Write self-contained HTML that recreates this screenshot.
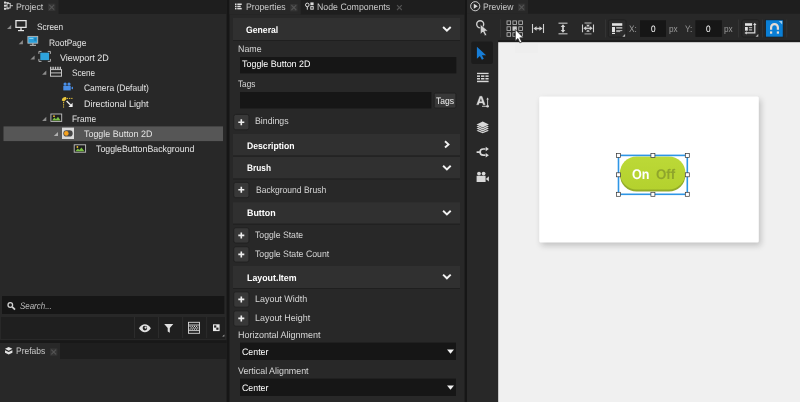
<!DOCTYPE html>
<html><head><meta charset="utf-8">
<style>
*{box-sizing:border-box;margin:0;padding:0}
html,body{width:800px;height:402px;overflow:hidden;background:#161616}
body{font-family:"Liberation Sans",sans-serif;font-size:9.4px;text-rendering:geometricPrecision;color:#e6e6e6;position:relative}
.a{position:absolute}
.t{position:absolute;white-space:nowrap;line-height:12px;height:12px;transform-origin:0 50%}
svg{position:absolute;left:0;top:0}
</style></head><body>
<svg width="800" height="402" viewBox="0 0 800 402">
<!-- LEFT PANEL -->
<rect x="0" y="0" width="226.6" height="402" fill="#282828"/>
<rect x="0" y="0" width="226.6" height="14" fill="#1e1e1e"/>
<rect x="0" y="0" width="58.5" height="14" fill="#282828"/>
<rect x="3.5" y="126.4" width="219.5" height="14.7" fill="#565656"/>
<rect x="2" y="296" width="222.3" height="18" fill="#161616"/>
<rect x="1" y="317" width="224" height="22" fill="#1f1f1f"/>
<g fill="#2c2c2c"><rect x="134" y="317" width="1" height="21"/><rect x="158" y="317" width="1" height="21"/><rect x="182.200" y="317" width="1" height="21"/><rect x="206.200" y="317" width="1" height="21"/></g>
<rect x="0" y="340.2" width="226.6" height="2.8" fill="#181818"/>
<rect x="0" y="343" width="226.6" height="16" fill="#1e1e1e"/>
<rect x="0" y="343" width="60" height="16" fill="#282828"/>
<!-- MIDDLE PANEL -->
<rect x="229.5" y="0" width="235.1" height="402" fill="#282828"/>
<rect x="229.5" y="0" width="235.1" height="14.6" fill="#1e1e1e"/>
<rect x="229.5" y="0" width="71.2" height="14.6" fill="#282828"/>
<g fill="#303030">
<rect x="233" y="18" width="227" height="22"/>
<rect x="233" y="134" width="227" height="21.500"/>
<rect x="233" y="157" width="227" height="21.500"/>
<rect x="233" y="202.200" width="227" height="21.500"/>
<rect x="233" y="266" width="227" height="22"/>
</g>
<g fill="#1f1f1f"><rect x="233" y="40" width="227" height="1"/><rect x="233" y="155.5" width="227" height="1"/><rect x="233" y="178.5" width="227" height="1"/><rect x="233" y="223.700" width="227" height="1"/><rect x="233" y="288" width="227" height="1"/></g>
<g fill="#161616">
<rect x="240" y="57" width="216.300" height="16.400"/>
<rect x="240" y="92" width="191.400" height="16.500"/>
<rect x="240" y="342.600" width="216" height="17.400"/>
<rect x="240" y="378.600" width="216" height="17.400"/>
</g>
<rect x="434.200" y="93.100" width="21.700" height="14.900" rx="1.500" fill="#383838" stroke="#1f1f1f" stroke-width="0.900"/>
<g fill="#383838" stroke="#1f1f1f" stroke-width="0.9">
<rect x="233.75" y="114.45" width="15.2" height="15.3" rx="2"/>
<rect x="233.75" y="182.35" width="15.2" height="15.3" rx="2"/>
<rect x="233.75" y="227.75" width="15.2" height="15.3" rx="2"/>
<rect x="233.75" y="246.75" width="15.2" height="15.3" rx="2"/>
<rect x="233.75" y="291.85" width="15.2" height="15.3" rx="2"/>
<rect x="233.75" y="310.85" width="15.2" height="15.3" rx="2"/>
</g>
<!-- RIGHT PANEL -->
<rect x="467" y="0" width="333" height="402" fill="#282828"/>
<rect x="467" y="0" width="333" height="13.750" fill="#1e1e1e"/>
<rect x="467" y="0" width="61" height="13.750" fill="#282828"/>
<rect x="498" y="40" width="302" height="3" fill="#1c1c1c"/>
<rect x="498.200" y="42.200" width="302" height="360" fill="#f0f0f0"/>
<rect x="515" y="43.500" width="23" height="9.500" fill="#eeeeee"/>
<rect x="471.200" y="41.500" width="21.800" height="22.500" rx="2" fill="#1c1c1c"/>
<g fill="#333"><rect x="500" y="19.400" width="1" height="18"/><rect x="605" y="19.400" width="1" height="18"/><rect x="738" y="19.400" width="1" height="18"/><rect x="762" y="19.400" width="1" height="18"/><rect x="786.200" y="19.400" width="1" height="18"/></g>
<rect x="608.400" y="19.800" width="17.700" height="17.300" rx="1.800" fill="#2b2b2b" stroke="#1e1e1e" stroke-width="0.800"/>
<rect x="741.900" y="19.800" width="17.200" height="17.300" rx="1.800" fill="#2b2b2b" stroke="#1e1e1e" stroke-width="0.800"/>
<rect x="640" y="20.250" width="26" height="16.600" fill="#161616"/>
<rect x="695.400" y="20.250" width="26.500" height="16.600" fill="#161616"/>
<rect x="765.400" y="19.800" width="17.800" height="17.300" fill="#0a7fd6" stroke="#1c1c1c" stroke-width="0.800"/>
<defs><filter id="sh" x="-10%" y="-10%" width="125%" height="130%"><feGaussianBlur stdDeviation="3.2"/></filter>
<linearGradient id="pg" x1="0" y1="0" x2="0" y2="1"><stop offset="0" stop-color="#bcd937"/><stop offset="1" stop-color="#b4d12e"/></linearGradient></defs>
<rect x="541.2" y="99.5" width="219.6" height="146" fill="#000" opacity="0.2" filter="url(#sh)"/>
<rect x="539.2" y="96.5" width="219.6" height="146" rx="1.5" fill="#fff"/>
<rect x="620" y="158.600" width="65.400" height="33" rx="16.500" fill="#93ac28"/>
<rect x="620" y="156.400" width="65.400" height="33" rx="16.500" fill="url(#pg)"/>
</svg>

<span class="t" style="left:16.10px;top:1.00px;color:#c9c9c9;transform:scaleX(0.935);">Project</span>
<span class="t" style="left:37.23px;top:21.00px;color:#e4e4e4;transform:scaleX(0.88);">Screen</span>
<span class="t" style="left:49.02px;top:37.00px;color:#e4e4e4;transform:scaleX(0.896);">RootPage</span>
<span class="t" style="left:60.19px;top:52.00px;color:#e4e4e4;transform:scaleX(0.959);">Viewport 2D</span>
<span class="t" style="left:72.03px;top:67.00px;color:#e4e4e4;transform:scaleX(0.87);">Scene</span>
<span class="t" style="left:83.62px;top:82.00px;color:#e4e4e4;transform:scaleX(0.903);">Camera (Default)</span>
<span class="t" style="left:83.99px;top:98.00px;color:#e4e4e4;transform:scaleX(0.958);">Directional Light</span>
<span class="t" style="left:72.22px;top:113.00px;color:#e4e4e4;transform:scaleX(0.892);">Frame</span>
<span class="t" style="left:83.60px;top:128.00px;color:#e4e4e4;transform:scaleX(0.951);">Toggle Button 2D</span>
<span class="t" style="left:96.00px;top:143.00px;color:#e4e4e4;transform:scaleX(0.939);">ToggleButtonBackground</span>
<span class="t" style="left:19.65px;top:300.00px;color:#bcbcbc;transform:scaleX(0.846);font-style:italic;">Search...</span>
<span class="t" style="left:16.22px;top:345.00px;color:#c9c9c9;transform:scaleX(0.903);">Prefabs</span>
<span class="t" style="left:245.51px;top:1.00px;color:#c9c9c9;transform:scaleX(0.926);">Properties</span>
<span class="t" style="left:316.70px;top:1.00px;color:#c9c9c9;transform:scaleX(0.935);">Node Components</span>
<span class="t" style="left:246.11px;top:24.00px;color:#ffffff;transform:scaleX(0.924);font-weight:bold;">General</span>
<span class="t" style="left:237.60px;top:43.00px;color:#d6d6d6;transform:scaleX(0.943);">Name</span>
<span class="t" style="left:241.90px;top:58.00px;color:#ffffff;transform:scaleX(0.952);">Toggle Button 2D</span>
<span class="t" style="left:237.63px;top:78.00px;color:#d6d6d6;transform:scaleX(0.875);">Tags</span>
<span class="t" style="left:436.01px;top:95.00px;color:#f0f0f0;transform:scaleX(0.912);">Tags</span>
<span class="t" style="left:255.20px;top:115.00px;color:#d6d6d6;transform:scaleX(0.934);">Bindings</span>
<span class="t" style="left:246.81px;top:140.00px;color:#ffffff;transform:scaleX(0.922);font-weight:bold;">Description</span>
<span class="t" style="left:246.63px;top:162.00px;color:#ffffff;transform:scaleX(0.884);font-weight:bold;">Brush</span>
<span class="t" style="left:255.82px;top:184.00px;color:#d6d6d6;transform:scaleX(0.91);">Background Brush</span>
<span class="t" style="left:246.60px;top:207.00px;color:#ffffff;transform:scaleX(0.947);font-weight:bold;">Button</span>
<span class="t" style="left:255.21px;top:229.00px;color:#d6d6d6;transform:scaleX(0.924);">Toggle State</span>
<span class="t" style="left:255.21px;top:248.00px;color:#d6d6d6;transform:scaleX(0.93);">Toggle State Count</span>
<span class="t" style="left:246.60px;top:272.00px;color:#ffffff;transform:scaleX(0.942);font-weight:bold;">Layout.Item</span>
<span class="t" style="left:255.20px;top:293.00px;color:#d6d6d6;transform:scaleX(0.954);">Layout Width</span>
<span class="t" style="left:255.20px;top:312.00px;color:#d6d6d6;transform:scaleX(0.954);">Layout Height</span>
<span class="t" style="left:237.59px;top:329.00px;color:#d6d6d6;transform:scaleX(0.961);">Horizontal Alignment</span>
<span class="t" style="left:241.60px;top:346.00px;color:#ffffff;transform:scaleX(0.938);">Center</span>
<span class="t" style="left:237.60px;top:365.00px;color:#d6d6d6;transform:scaleX(0.947);">Vertical Alignment</span>
<span class="t" style="left:241.60px;top:382.00px;color:#ffffff;transform:scaleX(0.938);">Center</span>
<span class="t" style="left:482.51px;top:1.00px;color:#c9c9c9;transform:scaleX(0.911);">Preview</span>
<span class="t" style="left:628.60px;top:23.00px;color:#9a9a9a;transform:scaleX(0.88);">X:</span>
<span class="t" style="left:651.00px;top:23.00px;color:#ffffff;transform:scaleX(0.88);">0</span>
<span class="t" style="left:668.77px;top:23.00px;color:#9a9a9a;transform:scaleX(0.88);">px</span>
<span class="t" style="left:685.08px;top:23.00px;color:#9a9a9a;transform:scaleX(0.88);">Y:</span>
<span class="t" style="left:706.33px;top:23.00px;color:#ffffff;transform:scaleX(0.88);">0</span>
<span class="t" style="left:724.34px;top:23.00px;color:#9a9a9a;transform:scaleX(0.88);">px</span>
<span class="t" style="left:632.04px;top:165.85px;color:#ffffff;transform:scaleX(0.896);font-size:14px;line-height:16px;height:16px;font-weight:bold;">On</span>
<span class="t" style="left:656.40px;top:165.85px;color:#8fa52b;transform:scaleX(0.949);font-size:14px;line-height:16px;height:16px;font-weight:bold;">Off</span>

<svg width="800" height="402" viewBox="0 0 800 402">
<!-- tree arrows -->
<g fill="#8c8c8c">
<path d="M11.2 24.9v4.200h-4.200z"/>
<path d="M22.9 40.1v4.200h-4.200z"/>
<path d="M34.6 55.4v4.200h-4.200z"/>
<path d="M46.3 70.6v4.200h-4.200z"/>
<path d="M46.3 116.7v4.200h-4.200z"/>
<path d="M58.0 131.9v4.200h-4.200z" fill="#b0b0b0"/>
</g>
<!-- project tab icon -->
<g fill="#d8d8d8"><rect x="4" y="1.600" width="2" height="2"/><rect x="4" y="4.700" width="2" height="2"/><rect x="4" y="7.800" width="2" height="2"/></g>
<g fill="none" stroke="#d8d8d8" stroke-width="0.900"><rect x="7" y="3.400" width="3.200" height="4.600"/><path d="M6 2.600h2.600v0.800M6 5.700h1M6 8.800h2.600v-0.800M10.200 5.700h2.800"/></g>
<!-- Screen icon -->
<g fill="#e6e6e6"><path d="M15.3 19.9h11.4v8.2h-11.4zM16.6 21.2v5.6h8.8v-5.6z" fill-rule="evenodd"/>
<rect x="20.3" y="28.1" width="1.4" height="2"/><rect x="18" y="30" width="6" height="1.2"/></g>
<!-- RootPage icon -->
<g><rect x="27.9" y="36.4" width="9.8" height="6.8" fill="#2a9fda" stroke="#b8b8b8" stroke-width="0.9"/>
<rect x="29.3" y="37.8" width="4" height="1.2" fill="#7fd0f5"/><rect x="34.3" y="37.8" width="2" height="3" fill="#1f7fb5"/>
<rect x="32.3" y="43.4" width="1.2" height="1.6" fill="#c8c8c8"/><rect x="29.8" y="44.8" width="6.2" height="1" fill="#c8c8c8"/></g>
<!-- Viewport 2D icon -->
<g><rect x="40.3" y="52.7" width="8.8" height="7.4" fill="#2fa4dd"/>
<path d="M38.9 53.9v-2.5h2.6M47.8 51.4h2.6v2.5M50.4 58.9v2.5h-2.6M41.5 61.4h-2.6v-2.5" fill="none" stroke="#bdbdbd" stroke-width="0.9"/></g>
<!-- Scene icon -->
<g fill="none" stroke="#c6c6c6" stroke-width="1"><rect x="50.5" y="69.6" width="11" height="6.6"/><path d="M50.5 72.9h11"/>
<path d="M50 68h12" stroke-width="2.6" stroke-dasharray="1.4 1"/></g>
<!-- Camera icon (blue) -->
<g fill="#4a8fe8"><circle cx="65.1" cy="84.1" r="1.6"/><circle cx="69" cy="84.1" r="1.6"/><rect x="63.3" y="85.8" width="7.4" height="4.6"/><path d="M71 88.1l2-1.5v3z"/></g>
<!-- Directional light -->
<g><path d="M61.8 100.4c0-2 1.6-3.6 4.2-3.4l0.6 2-2.6 2.6z" fill="#e8c53a"/>
<path d="M66.8 98.4h6.4M63.6 102v5.6" stroke="#e8c53a" stroke-width="1" stroke-dasharray="1.3 0.9" fill="none"/>
<path d="M66.6 101l4 4" stroke="#f0f0f0" stroke-width="1.3"/><path d="M72.6 107h-4.2l4.2-4.2z" fill="#f0f0f0"/></g>
<!-- Frame icon -->
<g><rect x="50.9" y="114" width="10.8" height="7.4" fill="#1e1e1e" stroke="#c2c2c2" stroke-width="0.9"/>
<path d="M52 120.4l2.4-2.8 1.6 1.6 2-2.4 2.6 3.6z" fill="#79c143"/><circle cx="54" cy="116.2" r="0.9" fill="#f0c030"/></g>
<!-- Toggle icon -->
<g><rect x="62" y="127.6" width="12" height="11.4" fill="#dadada"/><rect x="63.3" y="130.3" width="9.4" height="6.2" rx="3.1" fill="#474747"/><circle cx="66.3" cy="133.4" r="2.3" fill="#f6a21e"/></g>
<!-- TBB icon -->
<g><rect x="74.2" y="144.8" width="11.4" height="7.4" fill="#1e1e1e" stroke="#c2c2c2" stroke-width="0.9"/>
<path d="M75.4 151.2l2.4-2.8 1.6 1.6 2-2.4 3 3.6z" fill="#79c143"/><circle cx="77.4" cy="147" r="0.9" fill="#f0c030"/></g>
<!-- tab close x's -->
<g fill="#343434"><rect x="48" y="3.600" width="7.400" height="7.400"/><rect x="50" y="348.300" width="7.400" height="7.400"/><rect x="290.100" y="4" width="7.400" height="7.400"/><rect x="517.900" y="3.600" width="7.400" height="7.400"/></g>
<g stroke="#545454" stroke-width="1.1" fill="none">
<path d="M49.3 4.8l4.8 4.8M54.1 4.8l-4.8 4.8"/>
<path d="M51.3 349.6l4.8 4.8M56.1 349.6l-4.8 4.8"/>
<path d="M291.4 5.2l4.8 4.8M296.2 5.2l-4.8 4.8"/>
<path d="M397 5.2l4.8 4.8M401.8 5.2l-4.8 4.8"/>
<path d="M519.2 4.8l4.8 4.8M524 4.8l-4.8 4.8"/>
</g>
<!-- search magnifier -->
<g fill="none" stroke="#d0d0d0"><circle cx="10.3" cy="305" r="2.3" stroke-width="1.3"/><path d="M12.2 306.900l2.800 2.700" stroke-width="1.800"/></g>
<!-- prefabs icon -->
<g fill="#e2e2e2"><path d="M8.7 346.9l3.7 1.9-3.7 1.9-3.7-1.9z"/><path d="M5 350.2l3.7 1.9 3.7-1.9v2.5l-3.7 1.9-3.7-1.9z" /></g>
<!-- left toolbar icons -->
<g fill="#e0e0e0">
<path d="M138.9 328.3c1.8-2.7 3.8-4 6-4s4.200 1.300 6 4c-1.800 2.700-3.800 4-6 4s-4.200-1.300-6-4z"/>
<circle cx="144.900" cy="328.100" r="2.300" fill="#202020"/><circle cx="145.600" cy="327.600" r="1.100"/>
<path d="M164.200 323.900h9.100l-3.500 4v4.900l-2.100-1.300v-3.600z"/>
</g>
<g fill="none" stroke="#d8d8d8" stroke-width="0.9"><rect x="188.500" y="322.300" width="11" height="11"/><path d="M188.500 325h11M188.500 330.600h11"/>
<path d="M189.500 326.400h9M189.500 329.200h9" stroke-dasharray="1.100 1.100" stroke-width="1.300"/><path d="M190.600 327.800h9" stroke-dasharray="1.100 1.100" stroke-width="1.300"/></g>
<g><rect x="213" y="324.300" width="6.600" height="6.800" fill="#e8e8e8"/><rect x="214.100" y="325.400" width="2.200" height="2.200" fill="#222"/><rect x="216.300" y="327.600" width="2.200" height="2.200" fill="#222"/>
<path d="M224.400 334.400v2.200h-2.200z" fill="#aaa"/></g>
<!-- properties tab icon -->
<g fill="#e0e0e0"><rect x="235" y="3.500" width="1.500" height="1.500"/><rect x="235" y="5.700" width="1.500" height="1.500"/><rect x="235" y="7.900" width="1.500" height="1.500"/>
<rect x="237.300" y="3.500" width="4.400" height="1.500"/><rect x="237.300" y="5.700" width="3.400" height="1.500"/><rect x="237.300" y="7.900" width="4.400" height="1.500"/></g>
<!-- node components icon -->
<g fill="none" stroke="#dcdcdc" stroke-width="1"><circle cx="307.300" cy="4.900" r="1.800"/><path d="M307.300 6.700v3"/><rect x="310.800" y="6.600" width="2.400" height="2.600"/></g>
<rect x="310.400" y="2.400" width="3.200" height="2.800" fill="#dcdcdc"/>
<!-- chevrons -->
<g fill="none" stroke="#f2f2f2" stroke-width="1.900">
<path d="M443.100 27l3.800 3.700 3.800-3.700"/>
<path d="M445 141.300l3.500 3.100-3.500 3.100"/>
<path d="M443.100 165.800l3.800 3.700 3.800-3.700"/>
<path d="M443.100 210.800l3.800 3.700 3.800-3.700"/>
<path d="M443.100 274.600l3.800 3.700 3.800-3.700"/>
</g>
<!-- plus signs -->
<g fill="#ededed">
<path d="M238.300 121.400h6v1.600h-6zM240.500 119.200h1.600v6h-1.600z"/>
<path d="M238.300 189h6v1.600h-6zM240.500 186.800h1.600v6h-1.600z"/>
<path d="M238.300 234.600h6v1.600h-6zM240.500 232.400h1.600v6h-1.600z"/>
<path d="M238.300 253.600h6v1.600h-6zM240.500 251.400h1.600v6h-1.600z"/>
<path d="M238.300 298.600h6v1.600h-6zM240.500 296.400h1.600v6h-1.600z"/>
<path d="M238.300 317.600h6v1.600h-6zM240.500 315.400h1.600v6h-1.600z"/>
</g>
<!-- dropdown triangles -->
<g fill="#f2f2f2"><path d="M447 349.600h7l-3.500 4.200z"/><path d="M447 385.600h7l-3.500 4.200z"/></g>
<!-- preview tab icon -->
<g><circle cx="475.200" cy="6.200" r="4.600" fill="none" stroke="#dcdcdc" stroke-width="0.9"/><path d="M473.800 3.700l4 2.500-4 2.500z" fill="#dcdcdc"/></g>
<!-- toolbar: select-click icon -->
<g><circle cx="480.200" cy="24.200" r="3.500" fill="none" stroke="#cfcfcf" stroke-width="1.400"/><path d="M480.300 24.300l7.800 6.600-3.200 0.400 1.900 3.700-1.900 0.900-1.900-3.800-2.700 2.200z" fill="#cfcfcf" stroke="#252525" stroke-width="0.700"/></g>
<!-- 3x3 grid -->
<g fill="none" stroke="#bdbdbd" stroke-width="0.800">
<rect x="507" y="20.900" width="3.600" height="3.600"/><rect x="512.900" y="20.900" width="3.600" height="3.600"/><rect x="518.800" y="20.900" width="3.600" height="3.600"/>
<rect x="507" y="26.800" width="3.600" height="3.600"/><rect x="512.900" y="26.800" width="3.600" height="3.600" fill="#d0d0d0"/><rect x="518.800" y="26.800" width="3.600" height="3.600"/>
<rect x="507" y="32.700" width="3.600" height="3.600"/><rect x="512.900" y="32.700" width="3.600" height="3.600"/><rect x="518.800" y="32.700" width="3.600" height="3.600"/>
</g>
<!-- mouse cursor -->
<path d="M515.300 29.500v11.400l2.600-2.400 2 4.400 1.900-0.900-2-4.200h3.600z" fill="#fff" stroke="#222" stroke-width="0.700"/>
<!-- horizontal stretch -->
<g fill="none" stroke="#cfcfcf"><path d="M532.500 24v9M543.500 24v9" stroke-width="1.100"/><path d="M535.500 28.500h5" stroke-width="1.500"/></g>
<g fill="#cfcfcf"><path d="M533.400 28.500l3.200-2.300v4.600zM542.600 28.500l-3.200-2.300v4.600z"/></g>
<!-- vertical stretch -->
<g fill="none"><path d="M558.500 23.200h9M558.500 33.800h9" stroke="#9a9a9a" stroke-width="1.500"/><path d="M563 26.500v4" stroke="#d4d4d4" stroke-width="1.700"/></g>
<g fill="#d4d4d4"><path d="M563 24.300l2.300 2.700h-4.600zM563 32.700l2.300-2.700h-4.600z"/></g>
<!-- fit both -->
<g fill="none"><path d="M582.500 24.400v7.800M593.500 24.400v7.800" stroke="#cfcfcf" stroke-width="1.100"/><path d="M585.500 28.300h5" stroke="#cfcfcf" stroke-width="1.300"/><path d="M584.500 23h7M584.500 33.800h7" stroke="#8c8c8c" stroke-width="1.300"/></g>
<g fill="#cfcfcf"><path d="M583.300 28.300l3-2.200v4.400zM592.700 28.300l-3-2.200v4.400zM588 27.200l-1.800-2.400h3.600zM588 29.400l-1.800 2.400h3.600z"/></g>
<!-- layout button icon 1 -->
<g fill="#e2e2e2"><rect x="612" y="23.200" width="10.300" height="2.600"/><rect x="612" y="27" width="3" height="5.100"/><rect x="616.200" y="27" width="6.100" height="1.700" fill="#a8a8a8"/><rect x="616.200" y="30" width="6.100" height="1.100" fill="#a8a8a8"/><rect x="616.200" y="31" width="4" height="1.100" fill="#a8a8a8"/><rect x="612" y="32.900" width="3" height="1.100"/>
<path d="M625.100 33.900v2.800h-2.800z" fill="#b4b4b4"/></g>
<!-- layout button icon 2 -->
<g><rect x="745" y="23.200" width="7.100" height="2.600" fill="#e2e2e2"/><rect x="745" y="27" width="2.800" height="3.700" fill="#e2e2e2"/><rect x="748.900" y="27" width="3.200" height="1" fill="#b0b0b0"/><rect x="748.900" y="28.700" width="3.200" height="2" fill="#909090"/>
<path d="M754.800 24.500v8.400M746.500 32.900h8.900" stroke="#dcdcdc" stroke-width="1.200" fill="none"/><path d="M754.800 22.700l1.700 2.300h-3.400zM744.500 32.900l2.300-1.700v3.400z" fill="#dcdcdc"/>
<path d="M758.300 33.900v2.800h-2.800z" fill="#b4b4b4"/></g>
<!-- magnet icon -->
<g><path d="M771.100 29.800v-2.300a3.400 3.400 0 0 1 6.800 0v2.300" fill="none" stroke="#e6dcd4" stroke-width="2.200"/><rect x="770" y="31.400" width="2.200" height="2.300" fill="#e6dcd4"/><rect x="776.800" y="31.400" width="2.200" height="2.300" fill="#e6dcd4"/>
<path d="M778.800 21h3.400v3.400z" fill="#9fcdf0"/></g>
<!-- side toolbar -->
<path d="M476.900 46.700v12.100l3-2.800 2 3.800 1.900-1-1.900-3.600h4.200z" fill="#177dd6"/>
<g fill="#d8d8d8"><rect x="477" y="72.800" width="11.600" height="1.300"/><rect x="477" y="75.400" width="3" height="1.500"/><rect x="481" y="75.400" width="3.400" height="1.500"/><rect x="485.400" y="75.400" width="3.200" height="1.500"/>
<rect x="477" y="78" width="3" height="1.500"/><rect x="481" y="78" width="3.400" height="1.500"/><rect x="485.400" y="78" width="3.200" height="1.500"/><rect x="477" y="80.700" width="11.600" height="1.500"/></g>
<g fill="#d8d8d8"><path d="M476.600 104.800l3.200-8.500h2.200l3.200 8.500h-2l-0.600-1.900h-3.400l-0.600 1.900zM479.700 101.400h2.400l-1.200-3.500z" stroke="#d8d8d8" stroke-width="0.300"/><path d="M487.600 99v6M482 106.300h5" stroke="#d8d8d8" stroke-width="0.900" fill="none"/><circle cx="487.600" cy="106.300" r="1.300"/><path d="M487.600 97.600l1.300 1.800h-2.600z"/></g>
<g fill="#d8d8d8"><path d="M482.700 121.500l6.200 3-6.200 3-6.200-3z"/><path d="M476.500 126.500l1.600-0.800 4.600 2.200 4.600-2.200 1.600 0.800-6.200 3z"/><path d="M476.500 128.600l1.600-0.800 4.600 2.200 4.600-2.200 1.600 0.800-6.200 3z"/><path d="M476.500 130.700l1.600-0.800 4.600 2.200 4.600-2.200 1.600 0.800-6.200 2.600z"/></g>
<g fill="none" stroke="#d8d8d8" stroke-width="1.700"><path d="M476.600 152.100h3.200M485.500 149h-2.300a3.100 3.100 0 0 0 0 6.200h2.300"/></g>
<g fill="#d8d8d8"><path d="M488.900 149l-3.200-2.200v4.400zM488.900 155.200l-3.200-2.200v4.400z"/></g>
<g fill="#d8d8d8"><circle cx="479" cy="173.600" r="1.900"/><circle cx="483.600" cy="173.600" r="1.900"/><rect x="476.600" y="175.800" width="9" height="6.200"/><path d="M485.800 178.900l3.100-2.700v5.400z"/></g>
<!-- selection box -->
<rect x="618.500" y="155.400" width="68.800" height="38.900" fill="none" stroke="#2e96e6" stroke-width="1.600"/>
<g fill="#fff" stroke="#333" stroke-width="0.700">
<rect x="616.500" y="153.400" width="4" height="4"/><rect x="650.900" y="153.400" width="4" height="4"/><rect x="685.300" y="153.400" width="4" height="4"/>
<rect x="616.500" y="172.800" width="4" height="4"/><rect x="685.300" y="172.800" width="4" height="4"/>
<rect x="616.500" y="192.300" width="4" height="4"/><rect x="650.900" y="192.300" width="4" height="4"/><rect x="685.300" y="192.300" width="4" height="4"/>
</g>

</svg>
</body></html>
